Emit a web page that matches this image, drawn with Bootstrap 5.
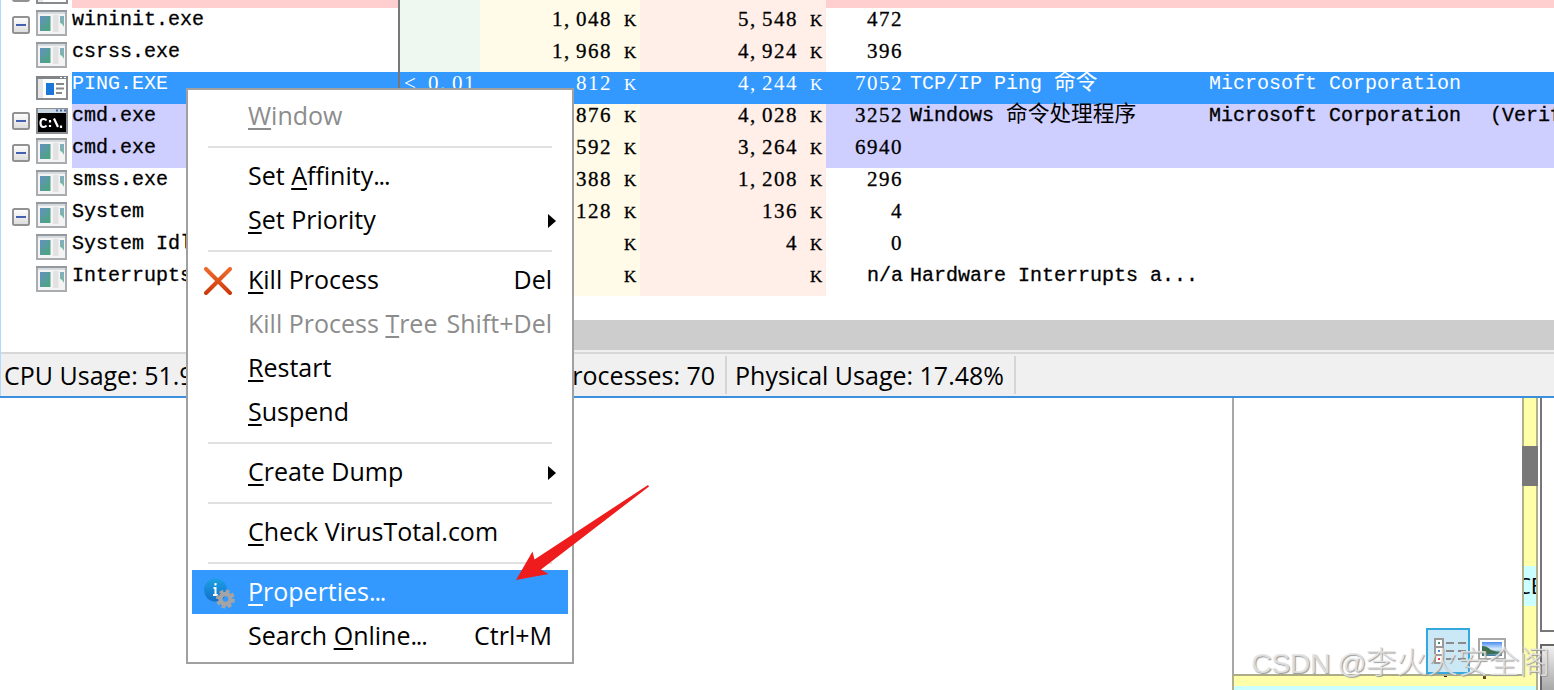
<!DOCTYPE html>
<html lang="zh-Hans">
<head>
  <meta charset="UTF-8" />
  <title>Process Explorer</title>
  <link href="https://cdn.jsdelivr.net/npm/bootstrap@5.3.3/dist/css/bootstrap.min.css" rel="stylesheet" />
  <style>
    body {
      width: 1554px;
      height: 690px;
      background: #fff;
      color: #000;
      font-family: "Open Sans", "Noto Sans CJK SC", sans-serif;
      font-size: 25px;
    }
    .explorer { height: 398px; border-bottom: 2px solid #3a90dc; }
    .explorer::before {
      content: "";
      position: absolute;
      left: 0; top: 0; bottom: 0;
      width: 1px;
      background: #b4dafa;
      z-index: 1;
    }

    /* process list */
    .proc-list { height: 320px; overflow: hidden; }
    .proc-list .proc-row:first-child { margin-top: -24px; }
    .proc-row {
      height: 32px;
      white-space: pre;
      font: 20px/23px "Liberation Mono", "Noto Sans CJK SC", monospace;
      -webkit-text-stroke: .3px;
    }
    .proc-row > * { flex-shrink: 0; }
    .tree-cell { width: 400px; padding-left: 12px; border-right: 2px solid #777; }
    .toggle-slot { width: 24px; padding-top: 8px; }
    .icon-slot { width: 36px; }
    .cpu-cell { width: 80px; padding-left: 4px; background: #eef8f0; }
    .priv-cell { width: 160px; padding-right: 4px; background: #fffbe8; }
    .work-cell { width: 186px; padding-right: 4px; background: #ffefe8; }
    .pid-cell { width: 84px; padding-right: 7px; }
    .desc-cell { width: 299px; }
    .comp-cell { width: 281px; }
    .sign-cell { width: 64px; }
    .num { font: 21px/22px "Liberation Serif", serif; letter-spacing: 1.5px; text-align: right; }
    .num.na { font: inherit; letter-spacing: 0; }
    .slot { display: inline-block; width: 12px; letter-spacing: 0; text-align: left; }
    .slot-k { font-size: 17px; }
    .hanzi { font-size: 21.7px; line-height: 20px; -webkit-text-stroke: 0; }
    .row-new .fill { background: #ffcfcf; }
    .row-own .fill { background: #cfcfff; }
    .row-active .fill, .row-active .tint { background: #3399ff; color: #fff; -webkit-text-stroke: 0; }

    .hscroll { height: 32px; margin-left: 400px; background: #cdcdcd; border-bottom: 2px solid #f0f0f0; }
    .status-line { height: 44px; background: #f0f0f0; border-top: 2px solid #d7d7d7; line-height: 42px; white-space: nowrap; }
    .status-cell { height: 38px; margin-top: 2px; padding: 0 10px 0 8px; border-right: 2px solid #d5d5d5; line-height: 38px; }
    .status-last { margin-right: 538px; }

    /* context menu */
    .ctx-menu {
      left: 186px; top: 88px;
      width: 388px; height: 576px;
      padding: 4px;
      background: #fff;
      border: 2px solid #a0a0a0;
      z-index: 10;
    }
    .ctx-item { height: 44px; padding: 0 16px 0 12px; line-height: 42px; white-space: nowrap; }
    .ctx-item > .ctx-text { height: 44px; }
    .ctx-item u { text-decoration-thickness: 2px; text-underline-offset: 3px; text-decoration-skip-ink: none; }
    .ctx-item.off { color: #8c8c8c; }
    .ctx-item.on { background: #3399ff; color: #fff; }
    .ctx-icon { width: 44px; padding-top: 2px; }
    .ctx-line { height: 2px; margin: 8px 16px 6px; background: #e0e0e0; }
    .ctx-arrow { margin: 2px -4px 0 0; }
    .dots { letter-spacing: -1.2px; }

    /* window behind */
    .back-window { height: 292px; }
    .doc-area { width: 306px; margin-left: 1232px; }
    .doc-pane { width: 290px; height: 278px; border-left: 2px solid #a8a8a8; border-bottom: 2px solid #acac86; }
    .view-btn { width: 44px; height: 46px; margin: 0 8px 0 192px; border: 2px solid #35a8e0; background: #cbe8f6; }
    .thumb-view { margin-bottom: 14px; }
    .ruler { width: 16px; height: 278px; border: solid #b0b08a; border-width: 0 2px; background: #ffffaa; }
    .ruler-thumb { height: 40px; margin: 48px -2px 80px; background: #787878; }
    .ruler-label { height: 40px; background: #ccffff; font-size: 22px; line-height: 38px; }
    .foot-strip { height: 14px; border: solid #b0b08a; border-width: 0 2px; background: linear-gradient(#ffffaa 10px, #ccffff 10px); }
    .foot-strip svg { margin-left: 208px; }
    .side-col { width: 16px; padding-left: 2px; }
    .side-top { height: 234px; border: 2px solid #777; border-width: 0 0 2px 2px; }
    .side-btn { height: 46px; margin-top: 12px; border: 2px solid #666; border-width: 2px 0 0 2px; background: linear-gradient(#f0f0f0, #a8a8a8); }

    .pointer { left: 510px; top: 480px; z-index: 20; }
    .watermark {
      right: 4px; bottom: 5px;
      font: 28.5px/44px "Liberation Sans", "Noto Sans CJK SC", sans-serif;
      color: rgba(228, 228, 228, .9);
      text-shadow: 1px 1px 1px #999;
      white-space: nowrap;
      z-index: 30;
    }
    .watermark .latin { letter-spacing: -.5px; }
    .watermark .author { font-size: 30.7px; font-weight: 300; }
  </style>
</head>
<body class="position-relative overflow-hidden">

  <svg class="position-absolute" width="0" height="0">
    <defs>
      <linearGradient id="gTeal" x2="1" y2="1"><stop stop-color="#6490c0"/><stop offset="1" stop-color="#48a878"/></linearGradient>
      <linearGradient id="gBox" x2="0" y2="1"><stop stop-color="#fff"/><stop offset="1" stop-color="#dcdcdc"/></linearGradient>
      <linearGradient id="gRed" x2="0" y2="1"><stop stop-color="#ee6a2c"/><stop offset="1" stop-color="#cc3a0c"/></linearGradient>
      <linearGradient id="gInfo" x2="0" y2="1"><stop stop-color="#1ba0e4"/><stop offset="1" stop-color="#1470c8"/></linearGradient>
      <linearGradient id="gSky" x2="0" y2="1"><stop stop-color="#4a8cf0"/><stop offset=".5" stop-color="#d8ecfc"/><stop offset="1" stop-color="#3c78a0"/></linearGradient>
      <symbol id="toggle" viewBox="0 0 18 18">
        <rect x="1" y="1" width="16" height="16" rx="1.5" fill="url(#gBox)" stroke="#929292" stroke-width="2"/>
        <path d="M4 9h10" stroke="#4660b0" stroke-width="2"/>
      </symbol>
      <symbol id="exe" viewBox="0 0 32 28">
        <rect x="1" y="3" width="29" height="24" fill="#f4f4f4" stroke="#a9adb0" stroke-width="2"/>
        <path d="M0 3h31" stroke="#94999d" stroke-width="2"/>
        <path d="M2 5h27" stroke="#d4dce2" stroke-width="2"/>
        <rect x="4" y="8" width="10.5" height="15" fill="url(#gTeal)"/>
        <rect x="17" y="7" width="5.5" height="17" fill="#e2e2e2"/>
        <path d="M24 8h4v11q-2-4-4-4z" fill="url(#gTeal)" opacity=".75"/>
      </symbol>
      <symbol id="console" viewBox="0 0 32 28">
        <rect x="1" y="5" width="30" height="22" fill="#fff" stroke="#888b8e" stroke-width="2"/>
        <path d="M0 5.5h32" stroke="#808589" stroke-width="3"/>
        <path d="M24 5.5h2m2 0h2" stroke="#fff"/>
        <path d="M2 7h5v19H2z" fill="#e6e6e6"/>
        <rect x="10" y="11" width="8" height="12" fill="#1c78d8"/>
        <path d="M20 12h8m-8 4.500h8M20 21h6" stroke="#888" stroke-width="2"/>
      </symbol>
      <symbol id="cmd" viewBox="0 0 32 30">
        <rect x="1" y="5" width="30" height="24" fill="#000" stroke="#8c9094" stroke-width="2"/>
        <path d="M2 7h28" stroke="#c8d6e4" stroke-width="4"/>
        <path d="M20 6.500h2m2 0h2m2 0h2" stroke="#4468a0" stroke-width="2"/>
        <path d="M10.500 16.500q-1-1.500-3-1.500-3 0-3 4t3 4q2 0 3-1.500M14 16v2.500m0 2.500v2M18 14.500l4 8.500M25 21.500v2.500" fill="none" stroke="#fff" stroke-width="2.200"/>
      </symbol>
    </defs>
  </svg>

  <div class="explorer position-relative overflow-hidden">
    <div class="proc-list" id="procList"></div>
    <div class="hscroll"></div>
    <div class="status-line d-flex">
      <div class="ps-1">CPU Usage: 51.9</div>
      <div class="status-cell ms-auto">Processes: 70</div>
      <div class="status-cell status-last">Physical Usage: 17.48%</div>
    </div>
  </div>

  <div class="back-window d-flex">
    <div class="doc-area">
      <div class="d-flex">
        <div class="doc-pane d-flex align-items-end">
          <div class="view-btn">
            <svg class="d-block" width="40" height="42" fill="none">
              <path d="M7 9h8v24H7zM7 17h8M7 25h8" fill="#fff" stroke="#999" stroke-width="2"/>
              <path d="M10 13h2" stroke="#489068" stroke-width="2"/>
              <path d="M10 21h2" stroke="#3c8cf0" stroke-width="2"/>
              <path d="M10 29h2" stroke="#e83c3c" stroke-width="2"/>
              <path d="M18 13h8m4 0h8M18 21h8m4 0h8M18 29h8m4 0h8" stroke="#8b8b8b" stroke-width="2"/>
            </svg>
          </div>
          <svg class="thumb-view" width="28" height="22" viewBox="0 0 28 22">
            <path d="M1 1h26v20H1z" fill="#fff" stroke="#a8a8a8" stroke-width="2"/>
            <path d="M4 4h20v14H4z" fill="url(#gSky)"/>
            <path d="M4 8q5 0 9 4 5 2 11 2v2q-12-1-20 2z" fill="#3c7050"/>
          </svg>
        </div>
        <div class="ruler">
          <div class="ruler-thumb"></div>
          <div class="ruler-label d-flex justify-content-center overflow-hidden">CE</div>
        </div>
      </div>
      <div class="foot-strip">
        <svg class="d-block" width="50" height="4"><path d="M2 0h3v1H2z" fill="#412"/><path d="M41 0h3v3h-3z" fill="#642"/></svg>
      </div>
    </div>
    <div class="side-col">
      <div class="side-top"></div>
      <div class="side-btn"></div>
    </div>
  </div>

  <div class="ctx-menu position-absolute" id="ctxMenu"></div>

  <svg class="pointer position-absolute" width="144" height="104" viewBox="510 480 144 104">
    <path d="M516 580l16.500-28.500 2 8L648 485l1 1.500-108 83 7.500 4.500z" fill="#ee1c1c"/>
  </svg>

  <div class="watermark position-absolute"><span class="latin">CSDN @</span><span class="author">李火火安全阁</span></div>

  <script src="https://cdn.jsdelivr.net/npm/bootstrap@5.3.3/dist/js/bootstrap.bundle.min.js"></script>
  <script>
    const procs = [
      { icon: 'console', toggle: 1, state: 'new' },
      { name: 'wininit.exe', toggle: 1, priv: '1,048 K', work: '5,548 K', pid: '472' },
      { name: 'csrss.exe', priv: '1,968 K', work: '4,924 K', pid: '396' },
      { name: 'PING.EXE', icon: 'console', state: 'active', cpu: '< 0.01', priv: '812 K', work: '4,244 K', pid: '7052', desc: 'TCP/IP Ping 命令', comp: 'Microsoft Corporation' },
      { name: 'cmd.exe', icon: 'cmd', toggle: 1, state: 'own', priv: '876 K', work: '4,028 K', pid: '3252', desc: 'Windows 命令处理程序', comp: 'Microsoft Corporation', sign: '(Verif' },
      { name: 'cmd.exe', toggle: 1, state: 'own', priv: '592 K', work: '3,264 K', pid: '6940' },
      { name: 'smss.exe', priv: '388 K', work: '1,208 K', pid: '296' },
      { name: 'System', toggle: 1, priv: '128 K', work: '136 K', pid: '4' },
      { name: 'System Idl', priv: 'K', work: '4 K', pid: '0' },
      { name: 'Interrupts', priv: 'K', work: 'K', pid: 'n/a', desc: 'Hardware Interrupts a...' }
    ];

    // punctuation, blanks and the unit each take one full character cell
    const num = s => (s || '').replace(/[,. <K]/g, c =>
      `<span class="slot${c === 'K' ? ' slot-k' : ''}">${c === '<' ? '&lt;' : c}</span>`);
    const text = s => (s || '').replace(/[\u4e00-\u9fff]+/g, h => `<span class="hanzi">${h}</span>`);

    document.getElementById('procList').innerHTML = procs.map(p => [
      `<div class="proc-row d-flex row-${p.state || 'plain'}">`,
      '<div class="tree-cell d-flex">',
      `<div class="toggle-slot">${p.toggle ? '<svg class="d-block" width="18" height="18"><use href="#toggle"/></svg>' : ''}</div>`,
      `<div class="icon-slot"><svg class="d-block" width="32" height="${p.icon === 'cmd' ? 30 : 28}"><use href="#${p.icon || 'exe'}"/></svg></div>`,
      `<div class="fill flex-grow-1">${p.name || ''}</div></div>`,
      `<div class="cpu-cell tint num text-start">${num(p.cpu)}</div>`,
      `<div class="priv-cell tint num">${num(p.priv)}</div>`,
      `<div class="work-cell tint num">${num(p.work)}</div>`,
      `<div class="pid-cell fill num${p.pid === 'n/a' ? ' na' : ''}">${p.pid || ''}</div>`,
      `<div class="desc-cell fill">${text(p.desc)}</div>`,
      `<div class="comp-cell fill">${p.comp || ''}</div>`,
      `<div class="sign-cell fill overflow-hidden">${p.sign || ''}</div></div>`
    ].join('')).join('');

    const killIcon = '<svg width="28" height="28"><path d="M2 2l24 24M26 2L2 26" stroke="url(#gRed)" stroke-width="4" stroke-linecap="round"/></svg>';
    const infoIcon = `<svg width="31" height="31" viewBox="0 0 31 31"><circle cx="11.500" cy="12" r="11.500" fill="url(#gInfo)"/>
      <path d="M11.500 5v2.500M9.500 10h2v7M9 17h5" fill="none" stroke="#fff" stroke-width="2"/>
      <circle cx="21.500" cy="21" r="8" fill="none" stroke="#a4a4a4" stroke-width="3" stroke-dasharray="3.800 2.480"/>
      <circle cx="21.500" cy="21" r="5" fill="none" stroke="#a4a4a4" stroke-width="4.500"/></svg>`;
    const menu = [
      { label: '<u>W</u>indow', cls: 'off' }, null,
      { label: 'Set <u>A</u>ffinity...' },
      { label: '<u>S</u>et Priority', sub: 1 }, null,
      { label: '<u>K</u>ill Process', key: 'Del', icon: killIcon },
      { label: 'Kill Process <u>T</u>ree', key: 'Shift+Del', cls: 'off' },
      { label: '<u>R</u>estart' },
      { label: '<u>S</u>uspend' }, null,
      { label: '<u>C</u>reate Dump', sub: 1 }, null,
      { label: '<u>C</u>heck VirusTotal.com' }, null,
      { label: '<u>P</u>roperties...', cls: 'on', icon: infoIcon },
      { label: 'Search <u>O</u>nline...', key: 'Ctrl+M' }
    ];
    document.getElementById('ctxMenu').innerHTML = menu.map(m => m ? `
      <div class="ctx-item d-flex align-items-center ${m.cls || ''}">
        <div class="ctx-icon d-flex">${m.icon || ''}</div>
        <div class="ctx-text">${m.label.replace('...', '<span class="dots">...</span>')}</div>
        <div class="ctx-text ms-auto">${m.key || ''}</div>
        ${m.sub ? '<svg class="ctx-arrow" width="8" height="14"><path d="M0 0l8 7-8 7z"/></svg>' : ''}
      </div>` : '<div class="ctx-line"></div>').join('');
  </script>

</body>
</html>
